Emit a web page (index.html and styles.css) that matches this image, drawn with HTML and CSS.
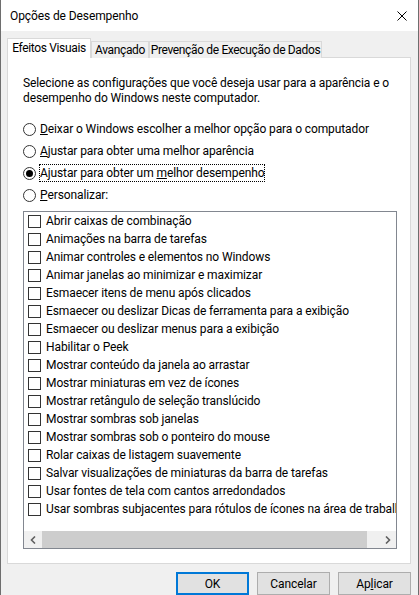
FILE: index.html
```html
<!DOCTYPE html>
<html lang="pt-br">
<head>
  <meta charset="UTF-8" />
  <title>Opções de Desempenho</title>
  <link rel="stylesheet" href="styles.css">
</head>
<body>
  <div class="janela">
    <div class="titulo">
      <span>Opções de Desempenho</span>
      <svg class="fechar" width="10" height="10" viewBox="0 0 10 10">
        <path d="M0.5 0.5 L9.5 9.5 M9.5 0.5 L0.5 9.5" stroke="#000" stroke-width="1" fill="none" />
      </svg>
    </div>

    <div class="corpo">
      <div class="abas">
        <div class="aba ativa">Efeitos Visuais</div>
        <div class="aba aba-avancado">Avançado</div>
        <div class="aba aba-dep">Prevenção de Execução de Dados</div>
      </div>

      <div class="painel">
        <p class="descricao">
          Selecione as configurações que você deseja usar para a aparência e o<br>
          desempenho do Windows neste computador.
        </p>

        <div class="opcoes">
          <div class="opcao"><span class="radio"></span><span><u>D</u>eixar o Windows escolher a melhor opção para o computador</span></div>
          <div class="opcao"><span class="radio"></span><span><u>A</u>justar para obter uma melhor aparência</span></div>
          <div class="opcao"><span class="radio marcado"></span><span class="foco">Ajustar para obter um <u>m</u>elhor desempenho</span></div>
          <div class="opcao"><span class="radio"></span><span><u>P</u>ersonalizar:</span></div>
        </div>

        <div class="lista">
          <div class="itens">
            <div class="item"><span class="caixa"></span>Abrir caixas de combinação</div>
            <div class="item"><span class="caixa"></span>Animações na barra de tarefas</div>
            <div class="item"><span class="caixa"></span>Animar controles e elementos no Windows</div>
            <div class="item"><span class="caixa"></span>Animar janelas ao minimizar e maximizar</div>
            <div class="item"><span class="caixa"></span>Esmaecer itens de menu após clicados</div>
            <div class="item"><span class="caixa"></span>Esmaecer ou deslizar Dicas de ferramenta para a exibição</div>
            <div class="item"><span class="caixa"></span>Esmaecer ou deslizar menus para a exibição</div>
            <div class="item"><span class="caixa"></span>Habilitar o Peek</div>
            <div class="item"><span class="caixa"></span>Mostrar conteúdo da janela ao arrastar</div>
            <div class="item"><span class="caixa"></span>Mostrar miniaturas em vez de ícones</div>
            <div class="item"><span class="caixa"></span>Mostrar retângulo de seleção translúcido</div>
            <div class="item"><span class="caixa"></span>Mostrar sombras sob janelas</div>
            <div class="item"><span class="caixa"></span>Mostrar sombras sob o ponteiro do mouse</div>
            <div class="item"><span class="caixa"></span>Rolar caixas de listagem suavemente</div>
            <div class="item"><span class="caixa"></span>Salvar visualizações de miniaturas da barra de tarefas</div>
            <div class="item"><span class="caixa"></span>Usar fontes de tela com cantos arredondados</div>
            <div class="item"><span class="caixa"></span>Usar sombras subjacentes para rótulos de ícones na área de trabalho</div>
          </div>

          <div class="rolagem">
            <span class="seta">
              <svg width="6" height="8" viewBox="0 0 6 8"><path d="M5 0.5 L1.5 4 L5 7.5" stroke="#606060" stroke-width="1.6" fill="none" /></svg>
            </span>
            <span class="trilho"><span class="polegar"></span></span>
            <span class="seta">
              <svg width="6" height="8" viewBox="0 0 6 8"><path d="M1 0.5 L4.5 4 L1 7.5" stroke="#606060" stroke-width="1.6" fill="none" /></svg>
            </span>
          </div>
        </div>
      </div>

      <div class="botoes">
        <button class="botao padrao">OK</button>
        <button class="botao">Cancelar</button>
        <button class="botao">Ap<u>l</u>icar</button>
      </div>
    </div>
  </div>
</body>
</html>
```

FILE: styles.css
```css
* {
  box-sizing: border-box;
}

body {
  margin: 0;
  font-family: 'Roboto', 'Noto Sans', sans-serif;
  font-size: 12px;
  letter-spacing: -0.1px;
  color: #000;
  background-color: #fff;
}

.janela {
  width: 419px;
  height: 595px;
  overflow: hidden;
  border-left: 1px solid #6e6e6e;
  border-right: 1px solid #6e6e6e;
  background-color: #f0f0f0;
}

.titulo {
  height: 31px;
  background-color: #fff;
  display: flex;
  align-items: center;
  justify-content: space-between;
  padding: 0 11px 0 9px;
  font-size: 12px;
}

.fechar {
  display: block;
  margin-top: 1px;
}

.corpo {
  padding: 7px 7px 0 6px;
}

/* abas */
.abas {
  display: flex;
  align-items: flex-end;
  height: 20px;
  position: relative;
  z-index: 1;
  margin-bottom: -1px;
  white-space: nowrap;
  letter-spacing: -0.35px;
}

.aba {
  height: 17px;
  border: 1px solid #d9d9d9;
  border-bottom: none;
  background-color: #f0f0f0;
  display: flex;
  align-items: center;
  justify-content: center;
  line-height: 15px;
}

.aba.ativa {
  width: 84px;
  height: 20px;
  background-color: #fff;
  padding-bottom: 1px;
}

.aba-avancado {
  width: 58px;
  padding-top: 1px;
}

.aba-dep {
  width: 173px;
  padding-top: 1px;
}

/* painel */
.painel {
  width: 404px;
  height: 507px;
  border: 1px solid #d9d9d9;
  background-color: #fff;
  padding: 18px 0 0 15px;
}

.descricao {
  margin: 0;
  line-height: 15px;
}

.opcoes {
  margin-top: 12px;
}

.opcao {
  height: 22px;
  display: flex;
  align-items: center;
  gap: 4px;
  white-space: nowrap;
}

.radio {
  width: 13px;
  height: 13px;
  border: 1px solid #333;
  border-radius: 50%;
  flex-shrink: 0;
  display: flex;
  align-items: center;
  justify-content: center;
}

.radio.marcado::after {
  content: '';
  width: 7px;
  height: 7px;
  border-radius: 50%;
  background-color: #000;
}

.foco {
  outline: 1px dotted #000;
  outline-offset: 0;
  line-height: 16px;
}

/* lista de efeitos */
.lista {
  margin-top: 5px;
  width: 374px;
  height: 338px;
  border: 1px solid #828790;
  display: flex;
  flex-direction: column;
  overflow: hidden;
}

.itens {
  flex: 1;
  overflow: hidden;
}

.item {
  height: 18px;
  display: flex;
  align-items: center;
  gap: 5px;
  padding-left: 4px;
  white-space: nowrap;
}

.caixa {
  width: 13px;
  height: 13px;
  border: 1px solid #333;
  flex-shrink: 0;
}

.rolagem {
  height: 17px;
  display: flex;
  background-color: #f0f0f0;
}

.seta {
  width: 17px;
  display: flex;
  align-items: center;
  justify-content: center;
}

.trilho {
  flex: 1;
  display: flex;
  padding: 0 12px 0 1px;
}

.polegar {
  flex: 1;
  background-color: #cdcdcd;
}

/* botoes */
.botoes {
  display: flex;
  justify-content: flex-end;
  gap: 8px;
  margin-top: 8px;
}

.botao {
  width: 73px;
  height: 23px;
  font-family: inherit;
  font-size: 12px;
  letter-spacing: inherit;
  color: #000;
  background-color: #e1e1e1;
  border: 1px solid #adadad;
  padding: 0;
}

.botao.padrao {
  border: 2px solid #0078d7;
}
```
